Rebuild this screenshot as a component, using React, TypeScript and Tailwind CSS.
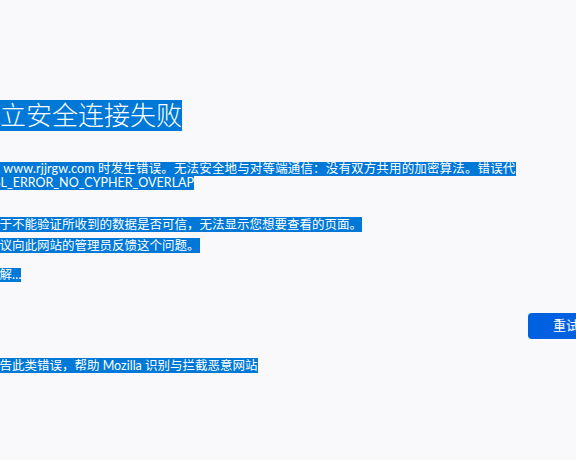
const SEL = "w-fit whitespace-nowrap bg-[#0078d7] text-white";

export default function App() {
  return (
    <div
      className="h-[460px] w-[576px] overflow-hidden bg-[#f9f9fb] text-[12.5px]"
      style={{ fontFamily: 'Lato, "Noto Sans CJK SC", sans-serif' }}
    >
      <div className="-ml-[38px] flex flex-col pt-[100px]">
        {/* title */}
        <h1 className={`ml-[12px] text-[26px] font-light leading-[31px] ${SEL}`}>
          建立安全连接失败
        </h1>

        {/* short description */}
        <div className="mt-[31px] leading-[14px]">
          <div className={`tracking-[0.15px] ${SEL}`}>
            连接到 www.rjjrgw.com 时发生错误。无法安全地与对等端通信：没有双方共用的加密算法。错误代
          </div>
          <div className={SEL}>码：SSL_ERROR_NO_CYPHER_OVERLAP</div>
        </div>

        {/* details list */}
        <ul className="ml-[25px] mt-[27px] flex flex-col gap-[6px] leading-[15px]">
          <li className={SEL}>由于不能验证所收到的数据是否可信，无法显示您想要查看的页面。</li>
          <li className={SEL}>建议向此网站的管理员反馈这个问题。</li>
        </ul>

        <a className={`mt-[15px] leading-[14px] ${SEL}`}>详细了解…</a>

        {/* retry */}
        <div className="mt-[31px] flex">
          <button className="ml-[566px] h-[26px] w-[80px] shrink-0 rounded-[4px] bg-[#0061e0] pl-[25px] text-left text-[13px] text-white">
            重试
          </button>
        </div>

        {/* report checkbox */}
        <label className={`ml-[25px] mt-[19px] leading-[15px] ${SEL}`}>
          报告此类错误，帮助 Mozilla 识别与拦截恶意网站
        </label>
      </div>
    </div>
  );
}
